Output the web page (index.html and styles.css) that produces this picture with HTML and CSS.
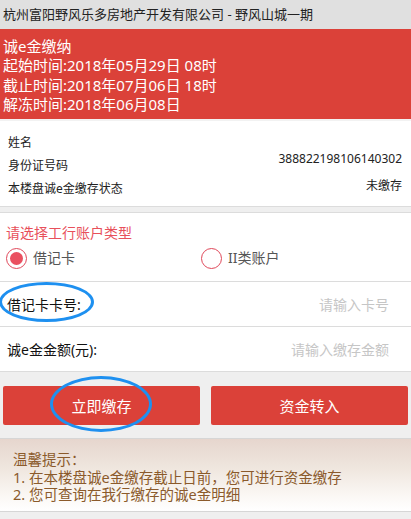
FILE: index.html
```html
<!DOCTYPE html>
<html lang="zh-CN">

<head>
    <meta charset="UTF-8">
    <meta name="viewport" content="width=device-width, initial-scale=1.0">
    <title>诚e金缴纳</title>

    <link rel="stylesheet" href="styles.css">
</head>

<body>
    <div class="topbar">杭州富阳野风乐多房地产开发有限公司 - 野风山城一期</div>

    <div class="notice">
        <p>诚e金缴纳</p>
        <p>起始时间:2018年05月29日 08时</p>
        <p>截止时间:2018年07月06日 18时</p>
        <p>解冻时间:2018年06月08日</p>
    </div>

    <div class="info">
        <div class="row"><span>姓名</span></div>
        <div class="row"><span>身份证号码</span><span class="val id-no">388822198106140302</span></div>
        <div class="row"><span>本楼盘诚e金缴存状态</span><span class="val state">未缴存</span></div>
    </div>

    <div class="panel">
        <div class="choose">
            <h4>请选择工行账户类型</h4>
            <div class="radios">
                <label class="radio checked"><i></i>借记卡</label>
                <label class="radio"><i></i>II类账户</label>
            </div>
        </div>
        <div class="field">
            <span class="label">借记卡卡号:<span class="mark mark-card"></span></span>
            <input type="text" placeholder="请输入卡号">
        </div>
        <div class="field">
            <span class="label">诚e金金额(元):</span>
            <input type="text" placeholder="请输入缴存金额">
        </div>
    </div>

    <div class="actions">
        <button class="btn">立即缴存<span class="mark mark-btn"></span></button>
        <button class="btn">资金转入</button>
    </div>

    <div class="tips">
        <p>温馨提示：</p>
        <p>1. 在本楼盘诚e金缴存截止日前，您可进行资金缴存</p>
        <p>2. 您可查询在我行缴存的诚e金明细</p>
    </div>
</body>
</html>
```

FILE: styles.css
```css
body {
    margin: 0;
    padding: 0;
    background-color: #efefef;
    font-family: "Noto Sans", "Noto Sans CJK SC", sans-serif;
    color: #222;
}

p {
    margin: 0;
}

.topbar {
    height: 29px;
    line-height: 29px;
    padding-left: 3px;
    background-color: #e0e0e0;
    font-size: 13px;
    color: #222;
    white-space: nowrap;
}

.notice {
    background-color: #db4139;
    color: #fff;
    padding: 8px 3px 5px;
    font-size: 15px;
    line-height: 19.3px;
}

.info {
    background-color: #fff;
    border-top: 2px solid #f2f2f2;
    border-bottom: 1px solid #dcdcdc;
    padding: 9px 9px 7px 8px;
    font-size: 12px;
}

.info .row {
    display: flex;
    justify-content: space-between;
    align-items: center;
    height: 23px;
}

.info .id-no {
    margin-top: -12px;
}

.info .state {
    margin-top: -6px;
}

.panel {
    background-color: #fff;
    margin-top: 5px;
    border-top: 1px solid #dcdcdc;
    border-bottom: 1px solid #dcdcdc;
}

.choose {
    padding: 11px 6px 0 6px;
    height: 57px;
    border-bottom: 1px solid #dcdcdc;
}

.choose h4 {
    margin: 0;
    font-size: 14px;
    font-weight: normal;
    color: #e8505b;
    line-height: 18px;
}

.radios {
    display: grid;
    grid-template-columns: 195px 1fr;
    margin-top: 5px;
}

.radio {
    display: flex;
    align-items: center;
    gap: 6px;
    font-size: 14px;
    color: #555;
    line-height: 22px;
}

.radio i {
    width: 19px;
    height: 19px;
    border: 1.5px solid #e0485a;
    border-radius: 50%;
    display: flex;
    align-items: center;
    justify-content: center;
}

.radio.checked i::after {
    content: "";
    width: 13px;
    height: 13px;
    border-radius: 50%;
    background-color: #ea5060;
}

.field {
    display: flex;
    align-items: center;
    justify-content: space-between;
    height: 44px;
    padding: 0 22px 0 7px;
    font-size: 14px;
    color: #111;
}

.field + .field {
    border-top: 1px solid #dcdcdc;
}

.field .label {
    position: relative;
    white-space: nowrap;
}

.field input {
    border: none;
    outline: none;
    text-align: right;
    font-family: inherit;
    font-size: 14px;
    width: 200px;
    padding: 0;
    background: transparent;
}

.field input::placeholder {
    color: #c6c6c6;
}

.actions {
    display: flex;
    gap: 11px;
    padding: 14px 3px 13px 3px;
}

.btn {
    position: relative;
    flex: 1;
    height: 39px;
    border: none;
    border-radius: 2px;
    background-color: #db4139;
    color: #fff;
    font-family: inherit;
    font-size: 15px;
}

.mark {
    position: absolute;
    border: 3px solid #1e90f0;
    border-radius: 50%;
    pointer-events: none;
}

.mark-card {
    left: -8px;
    top: -12px;
    width: 89px;
    height: 34px;
}

.mark-btn {
    left: 47px;
    top: -10px;
    width: 96px;
    height: 50px;
}

.tips {
    border-top: 1px solid #d6d6d6;
    border-bottom: 1px solid #d6d6d6;
    background: linear-gradient(to bottom, #e6d6ce 0%, #efe6de 40%, #fbf8f5 80%, #fff 100%);
    padding: 12px 13px 7px;
    font-size: 14.5px;
    line-height: 17.5px;
    color: #8b5a2b;
}
```
